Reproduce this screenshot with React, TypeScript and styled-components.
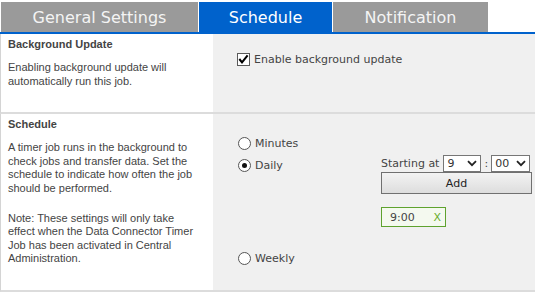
import { useState } from "react";
import styled, { createGlobalStyle } from "styled-components";

const GlobalStyle = createGlobalStyle`
  html, body {
    margin: 0;
    padding: 0;
    background: #fff;
  }
  body {
    font-family: "DejaVu Sans", Verdana, sans-serif;
    color: #444;
  }
`;

// tabs
const Page = styled.div`
  width: 535px;
`;

const TabBar = styled.div`
  display: flex;
  gap: 1px;
  padding: 2px 0 0 1px;
  border-bottom: 2px solid #0062cc;
`;

const Tab = styled.div<{ $width: number; $active?: boolean }>`
  width: ${(p) => p.$width}px;
  height: 30px;
  display: flex;
  align-items: center;
  justify-content: center;
  font-size: 16px;
  color: ${(p) => (p.$active ? "#fff" : "#f4f4f4")};
  background: ${(p) => (p.$active ? "#0062cc" : "#9a9a9a")};
  cursor: pointer;
`;

// sections
const Section = styled.section`
  display: grid;
  grid-template-columns: 212px 1fr;
  border-left: 1px solid #d4d4d4;
  border-bottom: 2px solid #dcdcdc;
`;

const InfoCell = styled.div`
  padding: 3px 10px 24px 7px;
  background: #fff;
  font-family: "Liberation Sans", Arial, sans-serif;
  font-size: 11px;
  color: #444;
`;

const Heading = styled.h3`
  margin: 0 0 10px;
  font-size: 11px;
  line-height: 14px;
  font-weight: bold;
`;

const Text = styled.p`
  margin: 0;
  line-height: 13.6px;

  & + & {
    margin-top: 16px;
  }
`;

const FieldCell = styled.div<{ $top: number }>`
  padding: ${(p) => p.$top}px 3px 0 24px;
  background: #f0f0f0;
  font-size: 11px;
`;

// checkbox + radios
const OptionLabel = styled.label`
  display: flex;
  align-items: center;
  gap: 4px;
  height: 13px;
  line-height: 13px;
  cursor: pointer;
  white-space: nowrap;
`;

const CheckBox = styled.span`
  width: 11px;
  height: 11px;
  border: 1px solid #5a5a5a;
  background: #fff;
  display: flex;
  align-items: center;
  justify-content: center;
  flex: none;
`;

const RadioCircle = styled.span<{ $checked: boolean }>`
  width: 11px;
  height: 11px;
  margin-left: 1px;
  border: 1px solid #555;
  border-radius: 50%;
  background: #fff;
  display: flex;
  align-items: center;
  justify-content: center;
  flex: none;

  &::after {
    content: "";
    width: 5px;
    height: 5px;
    border-radius: 50%;
    background: ${(p) => (p.$checked ? "#111" : "transparent")};
  }
`;

const RadioList = styled.div`
  display: flex;
  flex-direction: column;
`;

const MinutesRow = styled.div`
  margin-bottom: 5px;
`;

const DailyRow = styled.div`
  display: flex;
  align-items: flex-start;
  justify-content: space-between;

  & > label {
    margin-top: 4px;
  }
`;

const WeeklyRow = styled.div`
  margin-top: 25px;
`;

const DailyPanel = styled.div`
  width: 151px;
  display: flex;
  flex-direction: column;
  align-items: flex-start;
`;

const StartRow = styled.div`
  display: flex;
  align-items: center;
  height: 17px;
  white-space: nowrap;
`;

const StartLabel = styled.span`
  margin-right: 4px;
`;

const Colon = styled.span`
  margin: 0 3px 0 3px;
`;

const SelectBox = styled.div<{ $width: number }>`
  position: relative;
  width: ${(p) => p.$width}px;
  height: 17px;
  box-sizing: border-box;
  border: 1px solid #767676;
  background: #fff;

  & svg {
    position: absolute;
    right: 3px;
    top: 4px;
    pointer-events: none;
  }
`;

const Select = styled.select`
  appearance: none;
  width: 100%;
  height: 100%;
  border: 0;
  margin: 0;
  padding: 0 0 0 3px;
  background: transparent;
  font-family: "DejaVu Sans", Verdana, sans-serif;
  font-size: 11px;
  color: #333;
  outline: none;
`;

const AddButton = styled.button`
  width: 151px;
  height: 22px;
  border: 1px solid #707070;
  background: linear-gradient(#f3f3f3, #dddddd);
  font-family: "DejaVu Sans", Verdana, sans-serif;
  font-size: 11px;
  color: #222;
  padding: 0;
  cursor: pointer;
`;

const TimeChip = styled.div`
  margin-top: 13px;
  width: 65px;
  height: 20px;
  box-sizing: border-box;
  border: 1px solid #5ea22e;
  background: #f4f9ef;
  display: flex;
  align-items: center;
  justify-content: space-between;
  padding: 0 4px 0 8px;
  color: #444;
`;

const RemoveX = styled.span`
  color: #6aae2c;
  cursor: pointer;
`;

const Chevron = () => (
  <svg width="10" height="7" viewBox="0 0 10 7">
    <path d="M1 1.2 L5 5.2 L9 1.2" fill="none" stroke="#222" strokeWidth="1.8" />
  </svg>
);

type RadioProps = { label: string; checked: boolean; onSelect: () => void };

function Radio({ label, checked, onSelect }: RadioProps) {
  return (
    <OptionLabel onClick={onSelect}>
      <RadioCircle $checked={checked} />
      {label}
    </OptionLabel>
  );
}

const hours = Array.from({ length: 24 }, (_, i) => String(i));
const minutes = ["00", "15", "30", "45"];

export default function App() {
  const [enabled, setEnabled] = useState(true);
  const [freq, setFreq] = useState("daily");
  const [hour, setHour] = useState("9");
  const [minute, setMinute] = useState("00");
  const [times, setTimes] = useState(["9:00"]);

  return (
    <Page>
      <GlobalStyle />
      <TabBar>
        <Tab $width={197}>General Settings</Tab>
        <Tab $width={133} $active>
          Schedule
        </Tab>
        <Tab $width={155}>Notification</Tab>
      </TabBar>

      <Section>
        <InfoCell>
          <Heading>Background Update</Heading>
          <Text>Enabling background update will automatically run this job.</Text>
        </InfoCell>
        <FieldCell $top={19}>
          <OptionLabel onClick={() => setEnabled((v) => !v)}>
            <CheckBox>
              {enabled && (
                <svg width="11" height="11" viewBox="0 0 11 11">
                  <path d="M1.3 5 L4 8.3 L9.6 1.4" fill="none" stroke="#000" strokeWidth="2" />
                </svg>
              )}
            </CheckBox>
            Enable background update
          </OptionLabel>
        </FieldCell>
      </Section>

      <Section>
        <InfoCell>
          <Heading>Schedule</Heading>
          <Text>
            A timer job runs in the background to check jobs and transfer data. Set the schedule to
            indicate how often the job should be performed.
          </Text>
          <Text>
            Note: These settings will only take effect when the Data Connector Timer Job has been
            activated in Central Administration.
          </Text>
        </InfoCell>
        <FieldCell $top={23}>
          <RadioList>
            <MinutesRow>
              <Radio label="Minutes" checked={freq === "minutes"} onSelect={() => setFreq("minutes")} />
            </MinutesRow>
            <DailyRow>
              <Radio label="Daily" checked={freq === "daily"} onSelect={() => setFreq("daily")} />
              <DailyPanel>
                <StartRow>
                  <StartLabel>Starting at</StartLabel>
                  <SelectBox $width={38}>
                    <Select value={hour} onChange={(e) => setHour(e.target.value)}>
                      {hours.map((h) => (
                        <option key={h}>{h}</option>
                      ))}
                    </Select>
                    <Chevron />
                  </SelectBox>
                  <Colon>:</Colon>
                  <SelectBox $width={39}>
                    <Select value={minute} onChange={(e) => setMinute(e.target.value)}>
                      {minutes.map((m) => (
                        <option key={m}>{m}</option>
                      ))}
                    </Select>
                    <Chevron />
                  </SelectBox>
                </StartRow>
                <AddButton
                  onClick={() => {
                    const t = `${hour}:${minute}`;
                    if (!times.includes(t)) setTimes([...times, t]);
                  }}
                >
                  Add
                </AddButton>
                {times.map((t) => (
                  <TimeChip key={t}>
                    {t}
                    <RemoveX onClick={() => setTimes(times.filter((x) => x !== t))}>X</RemoveX>
                  </TimeChip>
                ))}
              </DailyPanel>
            </DailyRow>
            <WeeklyRow>
              <Radio label="Weekly" checked={freq === "weekly"} onSelect={() => setFreq("weekly")} />
            </WeeklyRow>
          </RadioList>
        </FieldCell>
      </Section>
    </Page>
  );
}
